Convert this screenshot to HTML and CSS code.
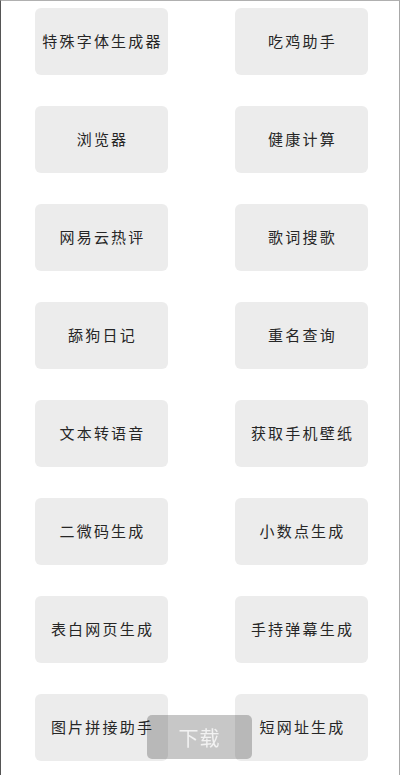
FILE: index.html
```html
<!DOCTYPE html>
<html lang="zh">
<head>
<meta charset="utf-8">
<title>工具</title>
<link rel="stylesheet" href="styles.css">
</head>
<body>
<div class="frame">
  <div class="grid">
    <div class="card"><span>特殊字体生成器</span></div>
    <div class="card"><span>吃鸡助手</span></div>
    <div class="card"><span>浏览器</span></div>
    <div class="card"><span>健康计算</span></div>
    <div class="card"><span>网易云热评</span></div>
    <div class="card"><span>歌词搜歌</span></div>
    <div class="card"><span>舔狗日记</span></div>
    <div class="card"><span>重名查询</span></div>
    <div class="card"><span>文本转语音</span></div>
    <div class="card"><span>获取手机壁纸</span></div>
    <div class="card"><span>二微码生成</span></div>
    <div class="card"><span>小数点生成</span></div>
    <div class="card"><span>表白网页生成</span></div>
    <div class="card"><span>手持弹幕生成</span></div>
    <div class="card"><span>图片拼接助手</span></div>
    <div class="card"><span>短网址生成</span></div>
  </div>
</div>
<div class="toast">下载</div>
</body>
</html>
```

FILE: styles.css
```css
html, body {
  margin: 0;
  padding: 0;
  background: #fff;
}
body {
  font-family: "Noto Sans CJK SC", "Noto Sans", sans-serif;
}
.frame {
  box-sizing: border-box;
  width: 400px;
  height: 775px;
  overflow: hidden;
  border-top: 1px solid #b0b0b0;
  border-left: 1px solid #555;
  border-right: 1px solid #a8a8a8;
  padding: 7px 0 0 34px;
}
.grid {
  display: grid;
  grid-template-columns: 133px 133px;
  column-gap: 67px;
  row-gap: 31px;
  grid-auto-rows: 67px;
}
.card {
  background: #ececec;
  border-radius: 6px;
  display: flex;
  align-items: center;
  justify-content: center;
}
.card span {
  font-size: 15px;
  letter-spacing: 2.2px;
  color: #262626;
  padding: 0 0 2px 2px;
  line-height: 1;
}
.toast {
  position: fixed;
  left: 147px;
  top: 715px;
  width: 105px;
  height: 44px;
  border-radius: 5px;
  background: rgba(0, 0, 0, 0.22);
  color: #f2f2f2;
  font-size: 20px;
  display: flex;
  align-items: center;
  justify-content: center;
  letter-spacing: 1px;
}
```
